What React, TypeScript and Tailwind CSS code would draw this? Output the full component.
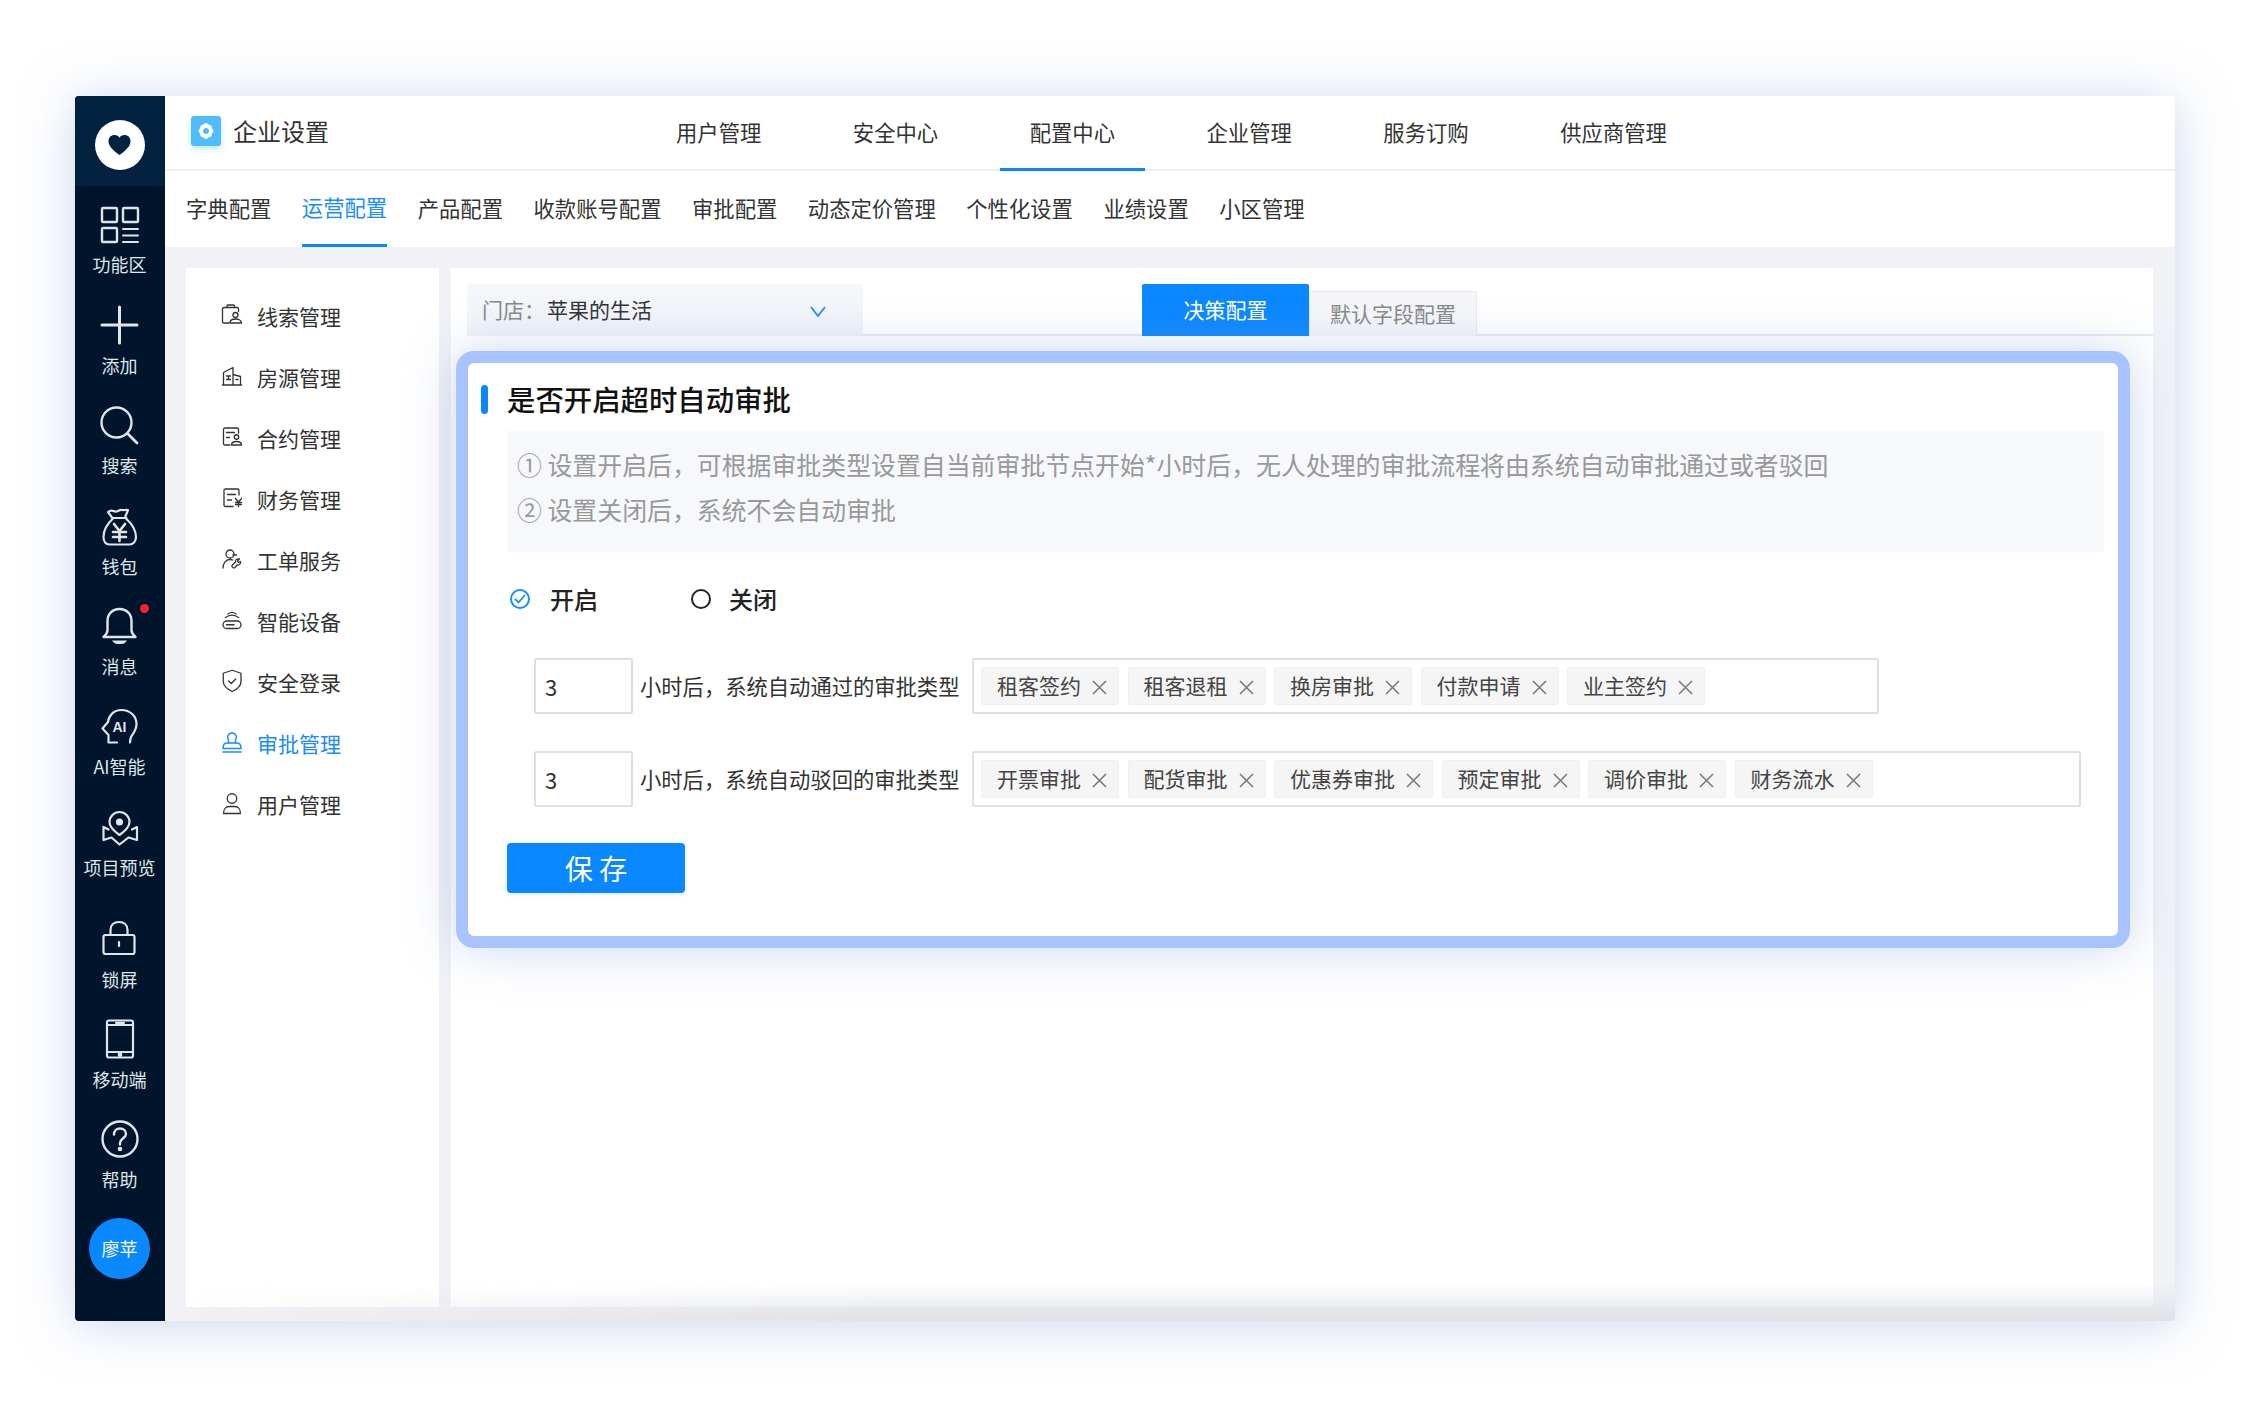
import { ReactNode } from "react";

const line = {
  fill: "none",
  stroke: "currentColor",
  strokeWidth: 1.6,
  strokeLinecap: "round" as const,
  strokeLinejoin: "round" as const,
};

function Icon({ size, children }: { size: number; children: ReactNode }) {
  return (
    <svg width={size} height={size} viewBox="0 0 40 40" className="overflow-visible" {...line}>
      {children}
    </svg>
  );
}

const sideItems: { label: string; box?: string; iconBox?: string; labelBox?: string; icon: ReactNode }[] = [
  {
    label: "功能区",
    labelBox: "mt-[8px]",
    icon: (
      <>
        <rect x="2" y="4" width="15" height="14" rx="1" strokeWidth="2.4" strokeLinejoin="miter" />
        <rect x="23" y="4" width="15" height="14" rx="1" strokeWidth="2.4" strokeLinejoin="miter" />
        <rect x="2" y="24" width="15" height="14" rx="1" strokeWidth="2.4" strokeLinejoin="miter" />
        <path d="M23 25h15M23 31.5h15M23 38h15" strokeWidth="2" />
      </>
    ),
  },
  {
    label: "添加",
    icon: <path d="M19.5 3v36M2 21h35" strokeWidth="3" />,
  },
  {
    label: "搜索",
    icon: (
      <>
        <circle cx="16.5" cy="18.5" r="15" strokeWidth="2.4" />
        <path d="m28 30 9 9" strokeWidth="2.8" />
      </>
    ),
  },
  {
    label: "钱包",
    iconBox: "mt-[3px]",
    labelBox: "mt-[7px]",
    icon: (
      <g strokeWidth="2.2">
        <path d="M12 10.500 8 5c3-2.500 5-1 7-.5 3 .5 4-2 7-1.500 2 .5 4-.5 6 0l-3 7.500" />
        <path d="M12.500 11h14" />
        <path d="M13 11.500C7 17 3.500 24 3.500 30c0 4.500 2.500 7.500 6 7.500h20c3.500 0 6.500-3 6.500-7.500 0-6-4-13-10-18.500" />
        <path d="m14 17 5.500 7 5.500-7M13 25h13M13 30h13M19.500 24v10" strokeWidth="2.6" />
      </g>
    ),
  },
  {
    label: "消息",
    labelBox: "mt-[10px]",
    icon: (
      <g strokeWidth="2.4">
        <path d="M3.500 33h32c-2.500-2-4-3.500-4-7v-9c0-7-5-12-12-12s-12 5-12 12v9c0 3.500-1.500 5-4 7Z" />
        <path d="M12 36.500h15c-2 3-4 3.500-7.500 3.500s-5.500-.5-7.500-3.500Z" fill="currentColor" stroke="none" />
      </g>
    ),
  },
  {
    label: "AI智能",
    iconBox: "mt-[3px]",
    labelBox: "mt-[7px]",
    icon: (
      <g strokeWidth="2.2">
        <path d="M17 35.500H8.500V28l-6-6.500L8 15C9 8 14 3 21.500 3 30 3 36.500 9 36.500 17c0 6-3 9-5 12-1 2-1.500 4-1.500 6.500" />
        <text x="19.500" y="24.500" textAnchor="middle" fontSize="14" fontWeight="700" fill="currentColor" stroke="none" fontFamily="Liberation Sans, sans-serif">
          AI
        </text>
      </g>
    ),
  },
  {
    label: "项目预览",
    iconBox: "mt-[3px]",
    labelBox: "mt-[8px]",
    icon: (
      <g strokeWidth="2.2">
        <path d="M19.500 28c-5-3.500-10-7.500-10-13a10 10 0 0 1 20 0c0 5.500-5 9.500-10 13Z" />
        <circle cx="19.500" cy="15" r="2.500" fill="currentColor" />
        <path d="M8.500 22.500 3.500 20v13l8-2.500 8 7 9-7 8.500 2.500V20l-5 2.500" />
      </g>
    ),
  },
  {
    label: "锁屏",
    box: "mt-[15px]",
    labelBox: "mt-[8px]",
    icon: (
      <g strokeWidth="2.2">
        <rect x="3.500" y="16" width="31" height="19" rx="2" />
        <path d="M10.500 16v-5C10.500 6 14 3 19 3s8.500 3 8.500 8v5" />
        <path d="M19 23v4" />
      </g>
    ),
  },
  {
    label: "移动端",
    labelBox: "mt-[8px]",
    icon: (
      <g strokeWidth="2.2">
        <rect x="7" y="1.500" width="26" height="37" rx="2" />
        <path d="M7 6h26M7 33h26M16 3.800h8" />
        <circle cx="20" cy="35.800" r="1.300" fill="currentColor" />
      </g>
    ),
  },
  {
    label: "帮助",
    labelBox: "mt-[8px]",
    icon: (
      <g strokeWidth="2.4">
        <circle cx="20" cy="20" r="17.500" />
        <path d="M14 15.500c0-3.500 2.500-6 6-6s6 2.500 6 5.500c0 4-6 4.500-6 9v1.500" />
        <circle cx="20" cy="30" r="1.100" fill="currentColor" />
      </g>
    ),
  },
];

const menuItems: { label: string; active?: boolean; icon: ReactNode }[] = [
  {
    label: "线索管理",
    icon: (
      <g strokeWidth="2.6">
        <path d="M14 36H4c-2 0-3-1-3-3V8c0-2 1-3 3-3h26c2 0 3 1 3 3v5" />
        <path d="M10 5V2c0-1 .5-2 2-2h11c1.500 0 2 1 2 2v3" />
        <circle cx="27" cy="20" r="5" />
        <path d="M16 36c0-5 5-8 11-8s12 3 12 8Z" />
      </g>
    ),
  },
  {
    label: "房源管理",
    icon: (
      <g strokeWidth="2.6">
        <path d="M3 38V13L22 3v35M22 17l15 4v17M1 38h38" />
        <path d="M9 20h8M9 27h8M13 20v7M28 27h4" />
      </g>
    ),
  },
  {
    label: "合约管理",
    icon: (
      <g strokeWidth="2.6">
        <path d="M16 36H6c-2 0-3-1-3-3V5c0-2 1-3 3-3h24c2 0 3 1 3 3v7" />
        <path d="M9 11h16M9 21h6" />
        <circle cx="29" cy="20" r="4.500" />
        <path d="M19 36c0-5 4-7 10-7s10 2 10 7Z" />
      </g>
    ),
  },
  {
    label: "财务管理",
    icon: (
      <g strokeWidth="2.6">
        <path d="M22 37H7c-2 0-3-1-3-3V5c0-2 1-3 3-3h24c2 0 3 1 3 3v9" />
        <path d="M11 13h16M11 24h8" />
        <path d="m27 21 6 7 6-7M27 29h12M27 33h12M33 28v9" />
      </g>
    ),
  },
  {
    label: "工单服务",
    icon: (
      <g strokeWidth="2.6">
        <circle cx="16" cy="10" r="8" />
        <path d="M22 12h7" />
        <path d="M2 38c0-9 5-17 14-17 2 0 4 .3 5.500 1" />
        <path d="m20 33 7-7c-1-4 3-7 8-6l-4 4 2 3 4-2c1 5-3 8-7 7l-4 5c-2 2-8-1-6-4Z" />
      </g>
    ),
  },
  {
    label: "智能设备",
    icon: (
      <g strokeWidth="2.6">
        <rect x="2" y="22" width="36" height="15" rx="7.500" />
        <path d="M9 29.500h15" />
        <path d="M7 15c8-6 18-6 26 0M12 8c5-4 11-4 16 0" />
      </g>
    ),
  },
  {
    label: "安全登录",
    icon: (
      <g strokeWidth="2.6">
        <path d="M20.500-1.500 38 4.500V21c0 9-7 15-17.500 20C10 36 2.500 30 2.500 21V4.500Z" />
        <path d="m13 20 5.500 5 9-9" />
      </g>
    ),
  },
  {
    label: "审批管理",
    active: true,
    icon: (
      <g strokeWidth="3">
        <path d="M13 22c1.500-3 .5-5-1-8-2.500-5 1-12 8-12s10.500 7 8 12c-1.500 3-2.500 5-1 8" />
        <path d="M2 33c0-7 3-11 8-11h20c5 0 8 4 8 11Z" />
        <path d="M2 40h36" />
      </g>
    ),
  },
  {
    label: "用户管理",
    icon: (
      <g strokeWidth="2.6">
        <circle cx="20" cy="11" r="9.500" />
        <path d="M3 41c0-9 5-14 11-14h12c6 0 11 5 11 14Z" />
      </g>
    ),
  },
];

const mainNav = ["用户管理", "安全中心", "配置中心", "企业管理", "服务订购", "供应商管理"];
const subNav = ["字典配置", "运营配置", "产品配置", "收款账号配置", "审批配置", "动态定价管理", "个性化设置", "业绩设置", "小区管理"];

function Tag({ text }: { text: string }) {
  return (
    <div className="flex h-[38px] items-center rounded-[2px] border border-[#efefef] bg-[#f5f5f5] pl-[15px] pr-[11px] text-[21px] text-[#444]">
      <span>{text}</span>
      <svg width="15" height="15" viewBox="0 0 15 15" className="ml-[11px] mt-[2px] text-[#777]" fill="none" stroke="currentColor" strokeWidth="1.5">
        <path d="m1 1 13 13M14 1 1 14" />
      </svg>
    </div>
  );
}

function RuleRow({ label, tags, width }: { label: string; tags: string[]; width: string }) {
  return (
    <div className="ml-[66px] flex items-center">
      <div className="flex h-[56px] w-[99px] items-center rounded-[2px] border-2 border-[#e0e0e0] pl-[9px] text-[22px] text-[#333]">3</div>
      <span className="ml-[7px] w-[320px] whitespace-nowrap text-[21.3px] text-[#333]">{label}</span>
      <div className={`ml-[12px] flex h-[56px] items-center gap-[8.5px] rounded-[2px] border-2 border-[#e0e0e0] pl-[7px] ${width}`}>
        {tags.map((t) => (
          <Tag key={t} text={t} />
        ))}
      </div>
    </div>
  );
}

export default function App() {
  return (
    <div className="h-[1422px] w-[2250px] overflow-hidden bg-white pl-[75px] pt-[96px] font-['Noto_Sans_CJK_SC',sans-serif]">
      <div className="relative flex h-[1225px] w-[2100px] rounded-[4px] shadow-[0_4px_50px_rgba(150,175,220,0.5)]">
        {/* left rail */}
        <aside className="flex h-full w-[90px] shrink-0 flex-col items-center rounded-l-[4px] bg-[#00152b] pr-[1px] text-[#dfe5ea]">
          <div className="-mr-[1px] flex h-[90px] w-[90px] shrink-0 items-center justify-center rounded-tl-[4px] bg-[#02223f] pr-[1px] pt-[8px]">
            <div className="flex h-[50px] w-[50px] items-center justify-center rounded-full bg-white">
              <svg width="25" height="22" viewBox="0 0 26 24">
                <path d="M13 23C7 18 1 14 1 7.500 1 3.500 4 1 7.500 1 10 1 12 2 13 4c1-2 3-3 5.500-3C22 1 25 3.500 25 7.500 25 14 19 18 13 23Z" fill="#02223f" />
              </svg>
            </div>
          </div>
          <div className="mt-[18px] flex flex-col items-center">
            {sideItems.map((item) => (
              <div key={item.label} className={`flex h-[100px] w-[89px] flex-col items-center ${item.box ?? ""}`}>
                <div className={`relative ${item.iconBox ?? ""}`}>
                  <Icon size={40}>{item.icon}</Icon>
                  {item.label === "消息" && <span className="absolute -right-[9px] top-0 h-[9px] w-[9px] rounded-full bg-[#f5222d]" />}
                </div>
                <span className={`whitespace-nowrap text-[18px] leading-[24px] ${item.labelBox ?? "mt-[9px]"}`}>{item.label}</span>
              </div>
            ))}
          </div>
          <div className="mt-[-1px] flex h-[61px] w-[61px] items-center justify-center rounded-full bg-[#0a88ff] text-[18px] text-white">廖苹</div>
        </aside>

        <div className="flex min-w-0 flex-1 flex-col overflow-hidden rounded-r-[4px]">
          {/* top nav */}
          <header className="flex h-[75px] shrink-0 items-end border-b-[2px] border-[#eeeeee] bg-white">
            <div className="flex h-[73px] w-[481px] items-center pb-[4px] pl-[26px]">
              <div className="flex h-[30px] w-[30px] items-center justify-center rounded-[3px] bg-[#4fbdfd] shadow-[0_3px_6px_rgba(79,189,253,0.35)]">
                <svg width="18" height="18" viewBox="0 0 18 18">
                  <path fillRule="evenodd" fill="#fff" d="M9 1c1.300 0 1.800 1 2.500 1.500s2 .2 2.800 1.200.3 2 .7 2.800 1.500 1.200 1.500 2.500-1.100 1.700-1.500 2.500-.1 1.900-.7 2.800-2.100.7-2.800 1.200S10.300 17 9 17s-1.800-1-2.500-1.500-2-.2-2.800-1.200-.3-2-.7-2.800S1.500 10.300 1.500 9s1.100-1.700 1.500-2.500.1-1.900.7-2.800 2.100-.7 2.800-1.200S7.700 1 9 1Zm0 5a3 3 0 1 0 0 6 3 3 0 0 0 0-6Z" />
                </svg>
              </div>
              <span className="ml-[12px] text-[24px] text-[#333]">企业设置</span>
            </div>
            <nav className="flex gap-[31.5px]">
              {mainNav.map((n) => (
                <div
                  key={n}
                  className={`-mb-[2px] flex h-[75px] items-center border-b-[3px] px-[30px] text-[21.33px] text-[#333] ${n === "配置中心" ? "border-[#0a88ff]" : "border-transparent"}`}
                >
                  {n}
                </div>
              ))}
            </nav>
          </header>

          {/* sub nav */}
          <div className="flex h-[76px] shrink-0 gap-[30.5px] bg-white pl-[21px]">
            {subNav.map((n) => (
              <div
                key={n}
                className={`flex h-full items-center pb-[2px] text-[21.33px] ${n === "运营配置" ? "border-b-[3px] border-[#0a88ff] pt-[1px] text-[#1a8cff]" : "text-[#333]"}`}
              >
                {n}
              </div>
            ))}
          </div>

          {/* body */}
          <div className="relative flex min-h-0 flex-1 gap-[12px] bg-[#f0f2f6] pb-[14px] pl-[21px] pr-[22px] pt-[21px]">
            <div className="w-[253px] shrink-0 bg-white pt-[18px]">
              {menuItems.map((m) => (
                <div key={m.label} className={`flex h-[61px] items-center pl-[36px] ${m.active ? "text-[#1a8cff]" : "text-[#333]"}`}>
                  <span className="-mt-[4px] flex">
                    <Icon size={20}>{m.icon}</Icon>
                  </span>
                  <span className="ml-[15px] text-[21px]">{m.label}</span>
                </div>
              ))}
            </div>

            <div className="relative min-w-0 flex-1 bg-white">
              {/* store + tabs */}
              <div className="ml-[16px] mt-[16px] flex h-[52px] border-b-2 border-[#e6eaf1]">
                <div className="flex h-[52px] w-[396px] items-center rounded-t-[4px] bg-gradient-to-b from-[#f5f7fb] to-[#f0f3f8] pl-[15px] text-[21px]">
                  <span className="text-[#888]">门店：</span>
                  <span className="ml-[2px] text-[#333]">苹果的生活</span>
                  <svg width="16" height="12" viewBox="0 0 16 12" className="ml-[158px] mt-[4px] text-[#1a8cff]" fill="none" stroke="currentColor" strokeWidth="1.8">
                    <path d="m1 1 7 9 7-9" />
                  </svg>
                </div>
                <div className="ml-[279px] flex h-[52px] w-[167px] items-center justify-center rounded-t-[2px] bg-[#0a88ff] text-[21px] text-white">决策配置</div>
                <div className="mt-[7px] flex h-[45px] w-[168px] items-center justify-center rounded-t-[2px] border border-b-0 border-[#e8e8e8] bg-[#f5f6f8] text-[21px] text-[#888]">默认字段配置</div>
              </div>

              {/* highlighted card */}
              <div className="relative z-10 ml-[5px] mt-[15px] h-[597px] w-[1674px] rounded-[18px] border-[12px] border-[#a8c3ff] bg-white shadow-[0_0_50px_rgba(140,165,215,0.45)]">
                <div className="ml-[13px] mt-[22px] flex h-[29px] items-center">
                  <span className="h-[29px] w-[7px] rounded-full bg-[#0a88ff]" />
                  <h2 className="ml-[19px] text-[28.4px] font-medium leading-none text-[#111]">是否开启超时自动审批</h2>
                </div>
                <div className="ml-[39px] mt-[17px] h-[121px] w-[1597px] bg-[#f6f8fb] pl-[10px] pt-[11px] text-[24.9px] leading-[45px] text-[#999]">
                  <p>① 设置开启后，可根据审批类型设置自当前审批节点开始*小时后，无人处理的审批流程将由系统自动审批通过或者驳回</p>
                  <p>② 设置关闭后，系统不会自动审批</p>
                </div>
                <div className="ml-[42px] mt-[30px] flex h-[34px] items-center text-[24px] font-medium text-[#222]">
                  <span className="flex h-[20px] w-[20px] items-center justify-center rounded-full border-2 border-[#1a8cff]">
                    <svg width="12" height="10" viewBox="0 0 12 10" fill="none" stroke="#1a8cff" strokeWidth="1.8">
                      <path d="m1 5 3.500 3.500L11 1" />
                    </svg>
                  </span>
                  <span className="ml-[20px]">开启</span>
                  <span className="ml-[93px] h-[20px] w-[20px] rounded-full border-2 border-[#222]" />
                  <span className="ml-[18px]">关闭</span>
                </div>
                <div className="mt-[42px] flex flex-col gap-[37px]">
                  <RuleRow label="小时后，系统自动通过的审批类型" width="w-[907px]" tags={["租客签约", "租客退租", "换房审批", "付款申请", "业主签约"]} />
                  <RuleRow label="小时后，系统自动驳回的审批类型" width="w-[1109px]" tags={["开票审批", "配货审批", "优惠券审批", "预定审批", "调价审批", "财务流水"]} />
                </div>
                <button className="ml-[39px] mt-[36px] h-[50px] w-[178px] rounded-[4px] bg-[#0a88ff] text-[28px] text-white shadow-[0_2px_4px_rgba(10,136,255,0.12)]">保 存</button>
              </div>
            </div>
            {/* soft shade along the bottom edge */}
            <div className="pointer-events-none absolute inset-x-0 bottom-0 h-[36px] bg-gradient-to-t from-[#dfe1e6] to-transparent [mask-image:linear-gradient(to_right,transparent,black_35%)]" />
          </div>
        </div>
      </div>
    </div>
  );
}
